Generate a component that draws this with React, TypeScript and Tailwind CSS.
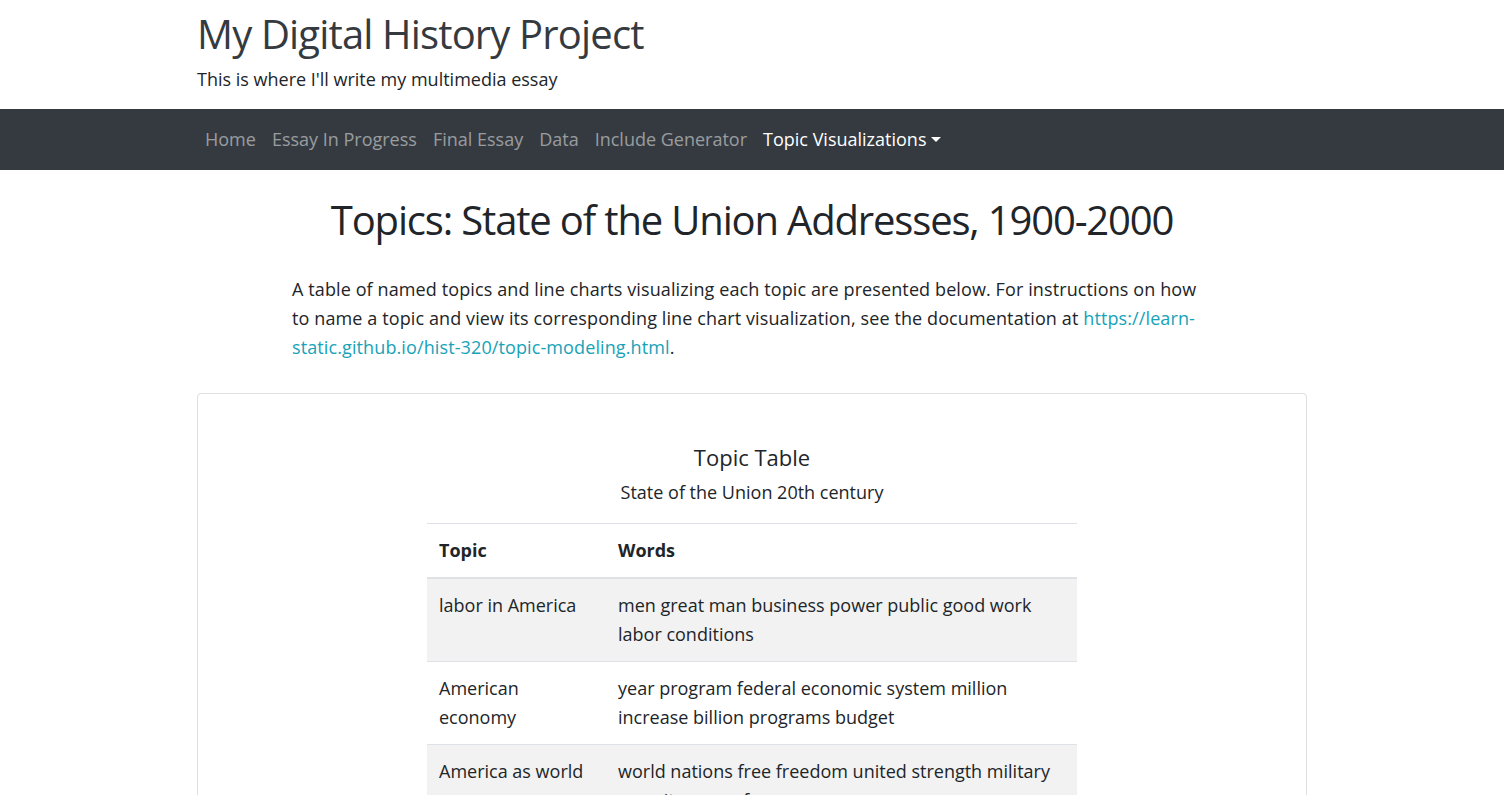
const rows = [
  { topic: "labor in America", words: "men great man business power public good work labor conditions" },
  { topic: "American economy", words: "year program federal economic system million increase billion programs budget" },
  { topic: "America as world", words: "world nations free freedom united strength military security peace force" },
];

export default function App() {
  return (
    <div className="min-h-screen bg-white text-[#212529] font-['Open_Sans',sans-serif]">
      {/* Header */}
      <header className="mx-auto w-[1140px] px-[15px] pt-[10px] pb-[16px]">
        <h1 className="text-[40px] leading-[1.2] text-[#343a40] font-normal tracking-[-0.021em]">My Digital History Project</h1>
        <p className="mt-[8px] text-[18px] leading-[27px]">This is where I'll write my multimedia essay</p>
      </header>

      {/* Navbar */}
      <nav className="bg-[#343a40] h-[61px] flex items-center">
        <div className="mx-auto w-[1140px] px-[15px] flex items-center">
          <a className="px-2 text-[18px] text-white/50">Home</a>
          <a className="px-2 text-[18px] text-white/50">Essay In Progress</a>
          <a className="px-2 text-[18px] text-white/50">Final Essay</a>
          <a className="px-2 text-[18px] text-white/50">Data</a>
          <a className="px-2 text-[18px] text-white/50">Include Generator</a>
          <a className="px-2 text-[18px] text-white flex items-center">
            Topic Visualizations
            <span className="ml-[5px] inline-block w-0 h-0 border-x-[5px] border-x-transparent border-t-[5px] border-t-white" />
          </a>
        </div>
      </nav>

      {/* Main */}
      <main className="mx-auto w-[1140px] px-[15px]">
        <h1 className="mt-[26px] text-center text-[40px] leading-[1.2] font-normal tracking-[-0.029em]">
          Topics: State of the Union Addresses, 1900-2000
        </h1>
        <p className="mt-[31px] mx-auto w-[920px] text-[18px] leading-[29px] tracking-[0.006em]">
          A table of named topics and line charts visualizing each topic are presented below. For instructions on how
          to name a topic and view its corresponding line chart visualization, see the documentation at{" "}
          <a className="text-[#17a2b8]">https://learn-static.github.io/hist-320/topic-modeling.html</a>.
        </p>

        <div className="mt-[31px] border border-black/[0.125] rounded-[4px] pt-[50px] pb-10">
          <div className="text-center text-[22px] leading-[1.2]">Topic Table</div>
          <div className="mt-[8px] text-center text-[18px] leading-[29px]">State of the Union 20th century</div>
          <table className="mx-auto mt-[16px] w-[650px] text-[18px] leading-[29px] border-collapse">
            <thead>
              <tr className="border-t border-[#dee2e6] border-b-2">
                <th className="w-[179px] text-left font-bold p-3">Topic</th>
                <th className="text-left font-bold p-3">Words</th>
              </tr>
            </thead>
            <tbody>
              {rows.map((r, i) => (
                <tr key={r.topic} className={`border-t border-[#dee2e6] ${i % 2 === 0 ? "bg-[#f2f2f2]" : ""}`}>
                  <td className="p-3 align-top">{r.topic}</td>
                  <td className="p-3 align-top">{r.words}</td>
                </tr>
              ))}
            </tbody>
          </table>
        </div>
      </main>
    </div>
  );
}
